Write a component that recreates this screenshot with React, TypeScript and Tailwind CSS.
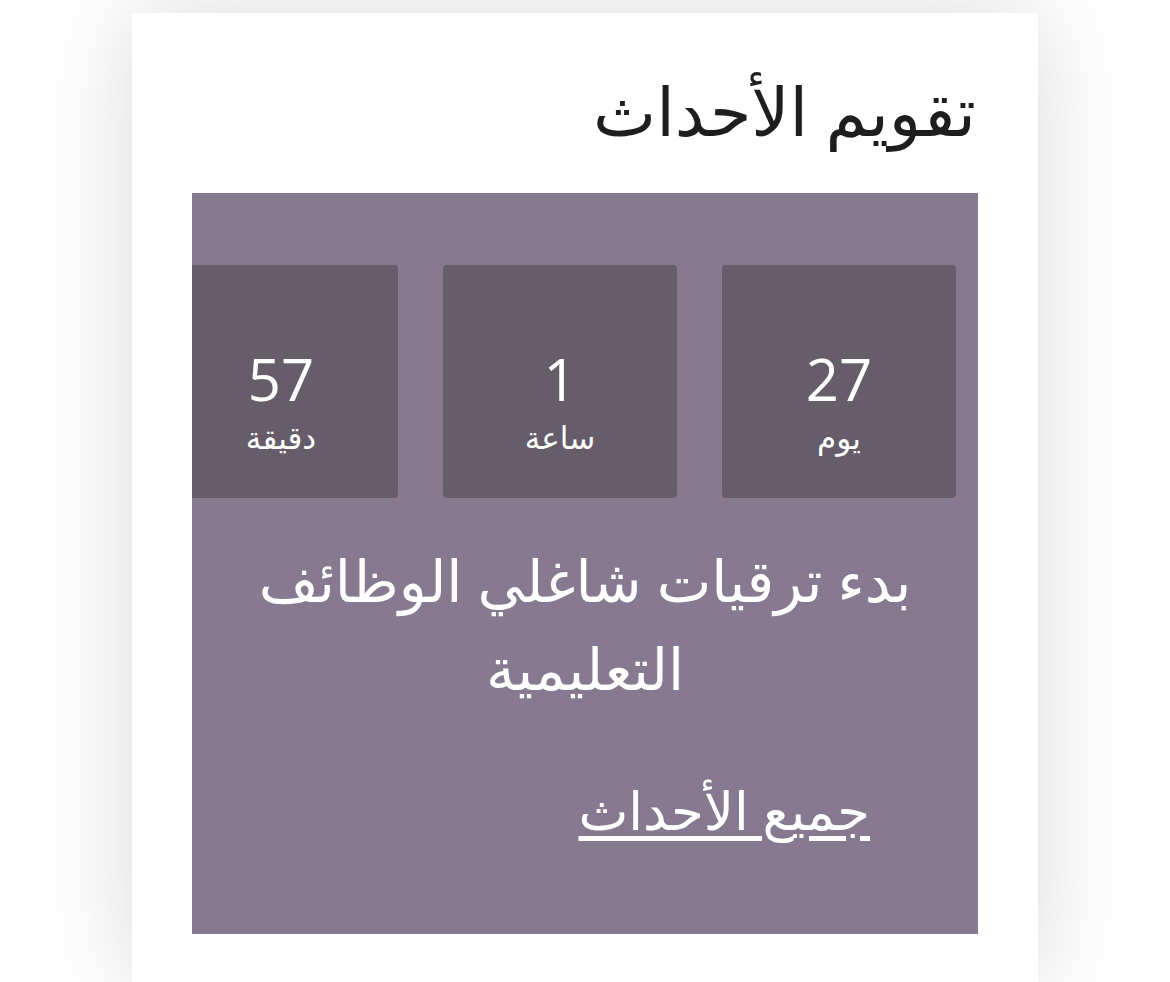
const units = [
  { value: "27", label: "يوم" },
  { value: "1", label: "ساعة" },
  { value: "57", label: "دقيقة" },
];

function CountBox({ value, label }: { value: string; label: string }) {
  return (
    <div className="flex h-[233px] w-[234px] shrink-0 flex-col items-center rounded-[4px] bg-[#665d6a] pt-[82px] text-white">
      <span className="text-[58px] leading-[64px]">{value}</span>
      <span className="mt-[6px] text-[31px] leading-[40px]">{label}</span>
    </div>
  );
}

export default function App() {
  return (
    <div
      dir="rtl"
      className="min-h-[982px] overflow-hidden bg-white font-['Open_Sans','DejaVu_Sans',sans-serif]"
    >
      <div className="mx-[132px] mt-[13px] min-h-[969px] bg-white px-[60px] shadow-[0_0_95px_rgba(0,0,0,0.15)]">
        <h2 className="pt-[54px] pr-[2px] text-[67px] leading-[86px] text-[#1e1e1e]">تقويم الأحداث</h2>

        <div className="mt-[40px] h-[741px] overflow-hidden bg-[#877a90] pt-[72px] text-white">
          <div className="flex gap-[45px] pr-[22px]">
            {units.map((u) => (
              <CountBox key={u.label} value={u.value} label={u.label} />
            ))}
          </div>

          <p className="mt-[38px] px-[30px] text-center text-[58px] leading-[88px]">
            بدء ترقيات شاغلي الوظائف التعليمية
          </p>

          <div className="mt-[68px] pr-[108px]">
            <a href="#" className="text-[53px] leading-[60px] text-white underline underline-offset-[6px]">
              جميع الأحداث
            </a>
          </div>
        </div>
      </div>
    </div>
  );
}
